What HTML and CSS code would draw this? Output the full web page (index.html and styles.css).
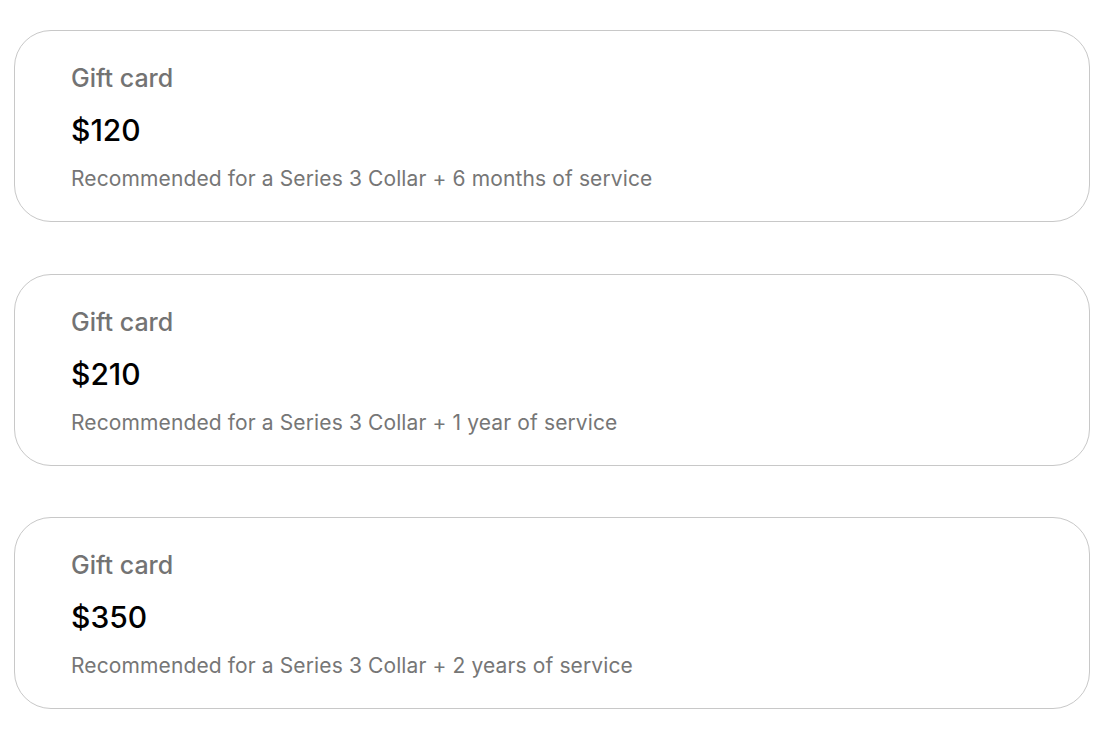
FILE: index.html
```html
<!DOCTYPE html>
<html lang="en">
<head>
<meta charset="utf-8">
<title>Gift cards</title>
<link rel="stylesheet" href="styles.css">
</head>
<body>
<main class="list">
  <section class="card">
    <p class="label">Gift card</p>
    <p class="price">$120</p>
    <p class="desc">Recommended for a Series 3 Collar + 6 months of service</p>
  </section>
  <section class="card">
    <p class="label">Gift card</p>
    <p class="price">$210</p>
    <p class="desc">Recommended for a Series 3 Collar + 1 year of service</p>
  </section>
  <section class="card">
    <p class="label">Gift card</p>
    <p class="price">$350</p>
    <p class="desc">Recommended for a Series 3 Collar + 2 years of service</p>
  </section>
</main>
</body>
</html>
```
FILE: styles.css
```css
html, body {
  margin: 0;
  padding: 0;
  background: #ffffff;
}
body {
  font-family: Inter, "Noto Sans", "Liberation Sans", sans-serif;
}
.list {
  display: flex;
  flex-direction: column;
  gap: 51.5px;
  padding: 30px 18px 0 14px;
}
.card {
  box-sizing: border-box;
  height: 192px;
  border: 1px solid #c8c8c8;
  border-radius: 37px;
  padding: 0 56px;
  display: flex;
  flex-direction: column;
}
.card p {
  margin: 0;
}
.card .label {
  margin-top: 32px;
  font-size: 25px;
  line-height: 30px;
  font-weight: 500;
  color: #737373;
}
.card .price {
  margin-top: 19px;
  font-size: 30px;
  line-height: 36px;
  font-weight: 500;
  color: #000000;
}
.card .desc {
  margin-top: 18px;
  font-size: 21px;
  line-height: 26px;
  font-weight: 400;
  letter-spacing: 0.12px;
  color: #767676;
}
```
